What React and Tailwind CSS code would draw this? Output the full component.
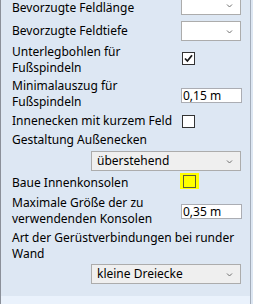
import React from 'react';

const font = { fontFamily: '"Noto Sans", "Segoe UI", sans-serif' };

const Chevron = () => (
  <svg width="7" height="5" viewBox="0 0 7 5" className="shrink-0">
    <path d="M1 1.5 L3.5 4 L6 1.5" fill="none" stroke="#707070" strokeWidth="1" />
  </svg>
);

const Dropdown = ({ value = '', wide = false }) => (
  <div
    className={`h-[20px] flex items-center justify-between border border-[#acacac] pl-[5px] pr-[7px] ${
      wide ? 'w-[150px] bg-[#efefef]' : 'w-[60px] bg-white'
    }`}
  >
    <span className="text-[12px] leading-[16px] text-black truncate">{value}</span>
    <Chevron />
  </div>
);

const Input = ({ value }) => (
  <div className="w-[61px] h-[15px] flex items-center bg-white border border-[#abadb3] pl-[1px]">
    <span className="text-[12px] leading-[13px] text-black">{value}</span>
  </div>
);

const Checkbox = ({ checked = false, highlight = false }) => {
  const box = (
    <div
      className={`w-[13px] h-[13px] border flex items-center justify-center ${
        highlight ? 'bg-[#ffff00] border-[#5c5c3c]' : 'bg-white border-[#333333]'
      }`}
    >
      {checked && (
        <svg width="9" height="9" viewBox="0 0 9 9">
          <path d="M1 4.5 L3.4 7 L8 1.2" fill="none" stroke="#1a1a1a" strokeWidth="1.8" />
        </svg>
      )}
    </div>
  );
  if (!highlight) return <div className="pl-[1px]">{box}</div>;
  return (
    <div className="w-[19px] h-[16px] -ml-[1px] bg-[#ffff00] flex items-center justify-center">{box}</div>
  );
};

// a settings row: label on the left, control in the right column
const Row = ({ h, labelPt, ctrlPt, leading = 'leading-[16px]', label, children }) => (
  <div className="flex items-start" style={{ height: h }}>
    <div className={`flex-1 ${leading}`} style={{ paddingTop: labelPt }}>{label}</div>
    <div className="w-[69px]" style={{ paddingTop: ctrlPt }}>{children}</div>
  </div>
);

export default function App() {
  return (
    <div className="w-[253px] h-[304px] overflow-hidden bg-[#dde7f3] flex" style={font}>
      <div className="w-[251px] h-full flex flex-col border-l border-[#8b9099] border-r border-r-[#a4adba]">
        <div className="flex-1 overflow-hidden">
          <div className="-mt-[5px] pl-[11px] text-[12px] text-black">
            <Row h={25} labelPt={7} ctrlPt={0} leading="leading-[12px]" label="Bevorzugte Feldlänge">
              <Dropdown />
            </Row>
            <Row h={23} labelPt={3} ctrlPt={1} label="Bevorzugte Feldtiefe">
              <Dropdown />
            </Row>
            <Row h={34} labelPt={1} ctrlPt={9} label={<>Unterlegbohlen für<br />Fußspindeln</>}>
              <Checkbox checked />
            </Row>
            <Row h={33} labelPt={1} ctrlPt={11} label={<>Minimalauszug für<br />Fußspindeln</>}>
              <Input value="0,15 m" />
            </Row>
            <Row h={20} labelPt={3} ctrlPt={5} label="Innenecken mit kurzem Feld">
              <Checkbox />
            </Row>
            <div className="h-[20px] pt-[2px] leading-[16px]">Gestaltung Außenecken</div>
            <div className="h-[22px] pt-[1px] pl-[79px]">
              <Dropdown value="überstehend" wide />
            </div>
            <Row h={20} labelPt={3} ctrlPt={1} label="Baue Innenkonsolen">
              <Checkbox highlight />
            </Row>
            <Row h={33} labelPt={3} ctrlPt={12} label={<>Maximale Größe der zu<br />verwendenden Konsolen</>}>
              <Input value="0,35 m" />
            </Row>
            <div className="pt-[5px] leading-[16px]">
              Art der Gerüstverbindungen bei runder<br />Wand
            </div>
            <div className="pt-[2px] pl-[79px]">
              <Dropdown value="kleine Dreiecke" wide />
            </div>
          </div>
        </div>
        <div className="h-[8px] bg-[#eaf2fc]" />
      </div>
    </div>
  );
}
